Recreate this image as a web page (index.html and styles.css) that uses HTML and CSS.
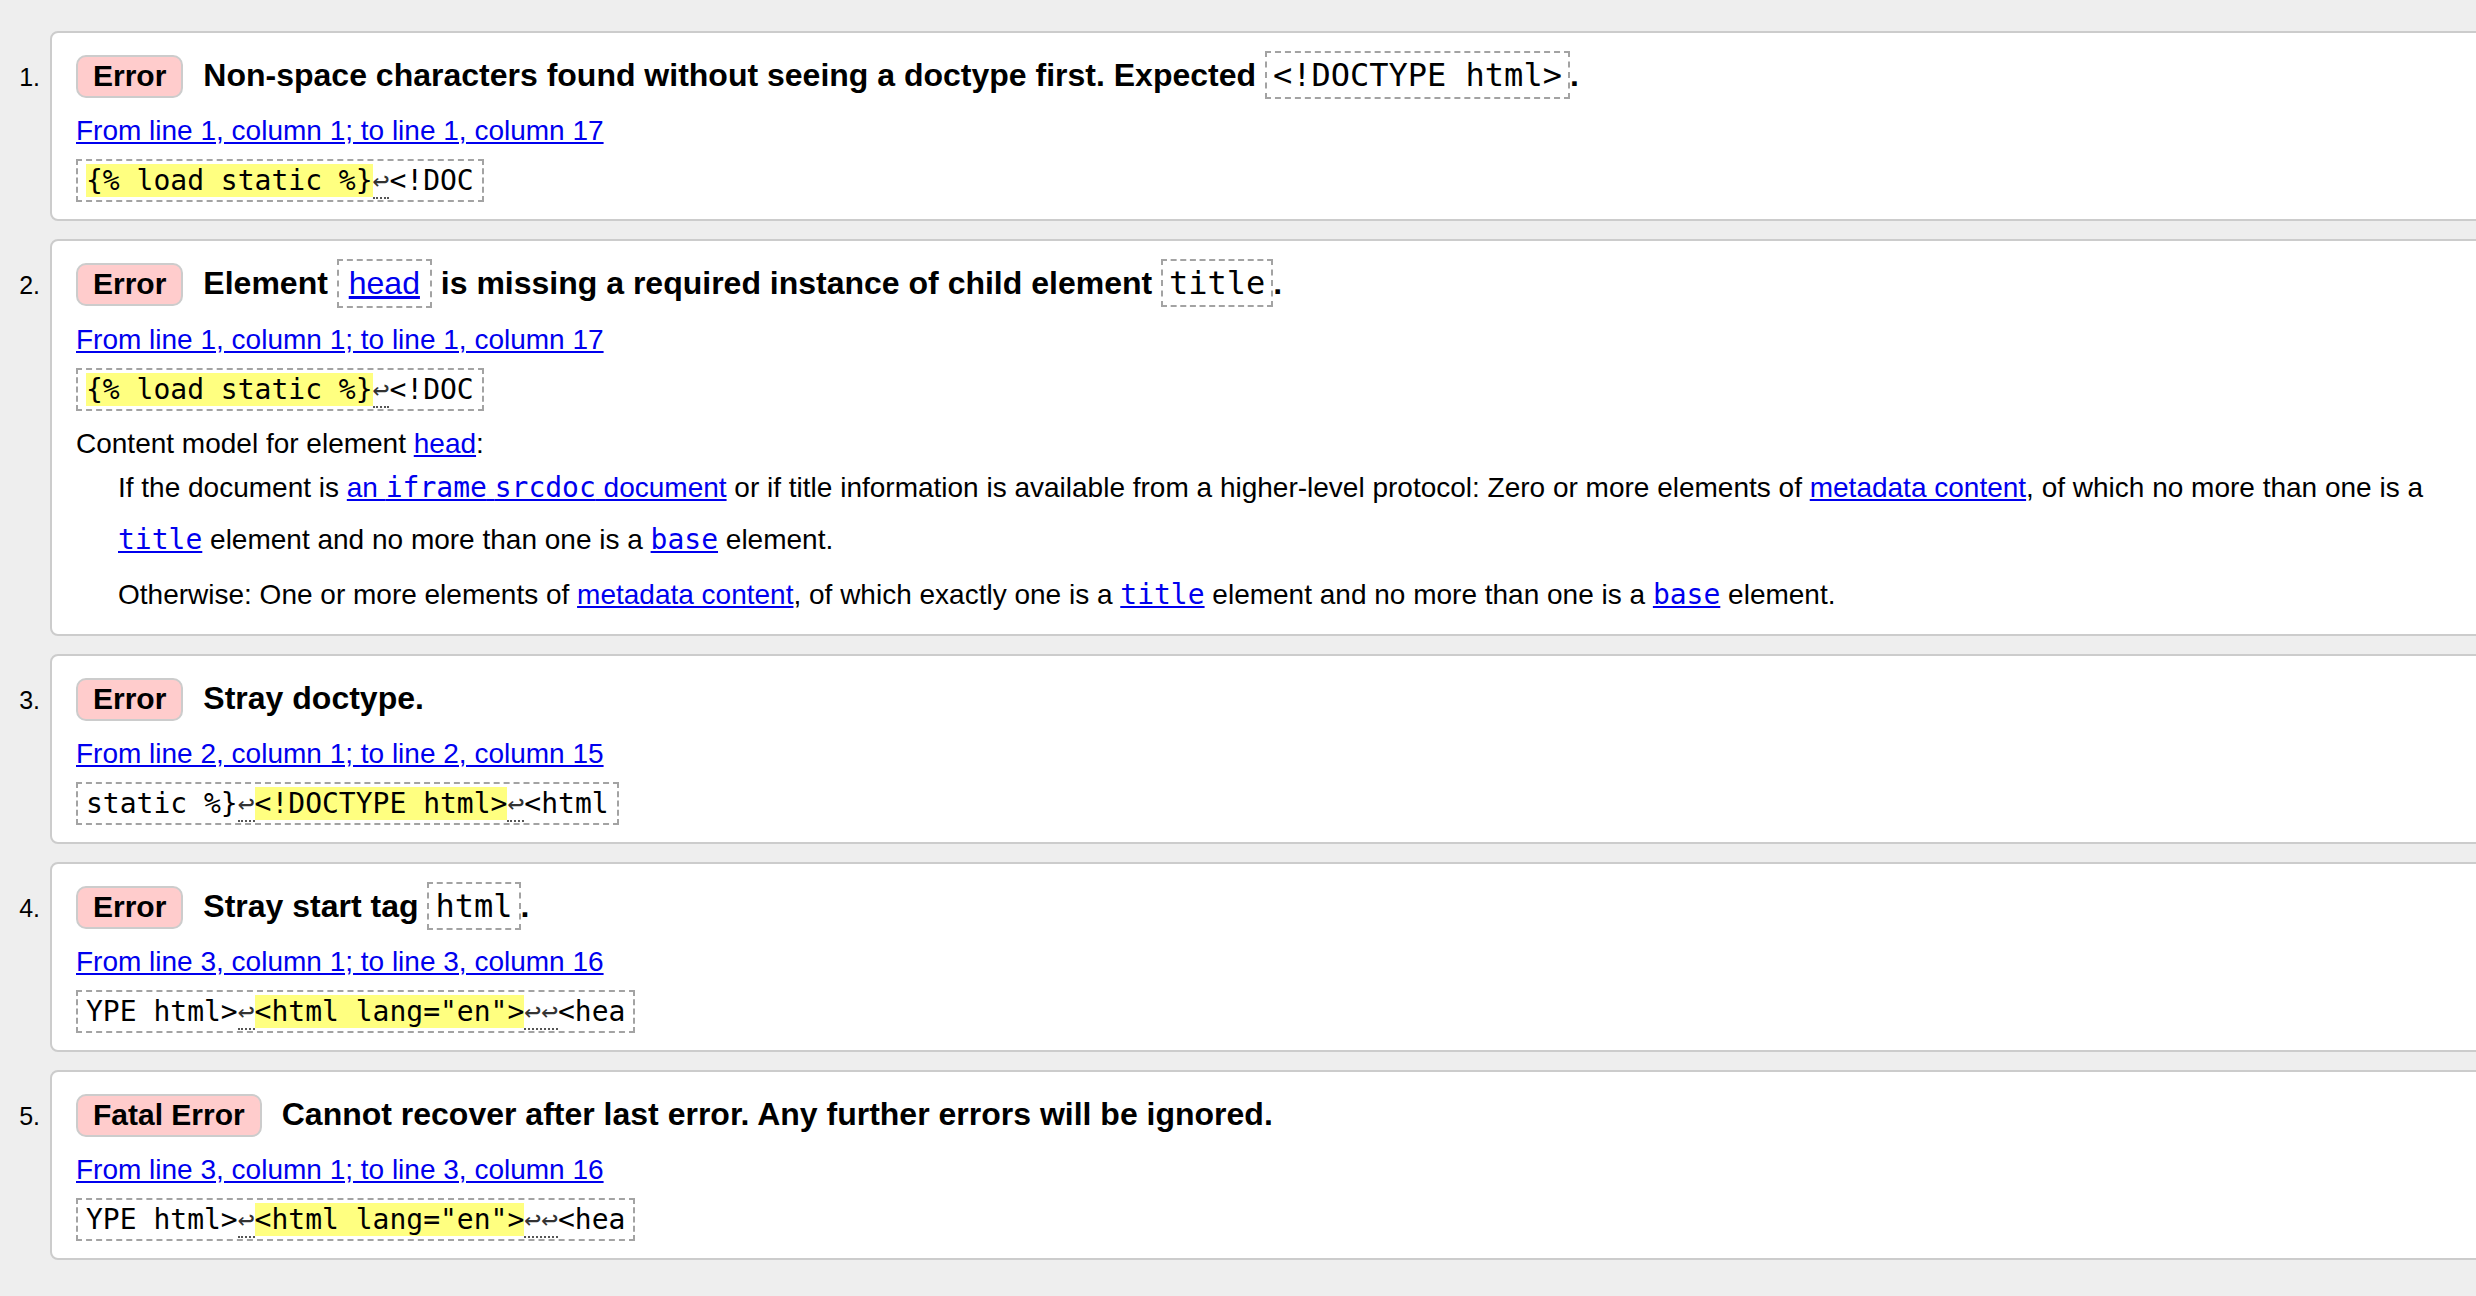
FILE: index.html
```html
<!DOCTYPE html>
<html lang="en">
<head>
<meta charset="utf-8">
<title>Validation results</title>
<link rel="stylesheet" href="styles.css">
</head>
<body>
<ol class="results">
  <li class="item">
    <span class="num">1.</span>
    <div class="card">
      <p class="head"><strong class="badge">Error</strong><span>Non-space characters found without seeing a doctype first. Expected <code class="hcode">&lt;!DOCTYPE html&gt;</code>.</span></p>
      <p class="loc"><a href="#l1">From line 1, column 1; to line 1, column 17</a></p>
      <p class="extract"><code class="ecode"><mark>{% load static %}</mark><span class="lf" title="Line break">↩</span>&lt;!DOC</code></p>
    </div>
  </li>
  <li class="item">
    <span class="num">2.</span>
    <div class="card">
      <p class="head"><strong class="badge">Error</strong><span>Element <code class="hcode sans"><a href="#head">head</a></code> is missing a required instance of child element <code class="hcode">title</code>.</span></p>
      <p class="loc"><a href="#l1b">From line 1, column 1; to line 1, column 17</a></p>
      <p class="extract"><code class="ecode"><mark>{% load static %}</mark><span class="lf" title="Line break">↩</span>&lt;!DOC</code></p>
      <dl class="model">
        <dt>Content model for element <a href="#head">head</a>:</dt>
        <dd>
          <p>If the document is <a href="#srcdoc">an <code>iframe</code> <code>srcdoc</code> document</a> or if title information is available from a higher-level protocol: Zero or more elements of <a href="#meta">metadata content</a>, of which no more than one is a <a href="#title"><code>title</code></a> element and no more than one is a <a href="#base"><code>base</code></a> element.</p>
          <p>Otherwise: One or more elements of <a href="#meta">metadata content</a>, of which exactly one is a <a href="#title"><code>title</code></a> element and no more than one is a <a href="#base"><code>base</code></a> element.</p>
        </dd>
      </dl>
    </div>
  </li>
  <li class="item">
    <span class="num">3.</span>
    <div class="card">
      <p class="head"><strong class="badge">Error</strong><span>Stray doctype.</span></p>
      <p class="loc"><a href="#l2">From line 2, column 1; to line 2, column 15</a></p>
      <p class="extract"><code class="ecode">static %}<span class="lf" title="Line break">↩</span><mark>&lt;!DOCTYPE html&gt;</mark><span class="lf" title="Line break">↩</span>&lt;html</code></p>
    </div>
  </li>
  <li class="item">
    <span class="num">4.</span>
    <div class="card">
      <p class="head"><strong class="badge">Error</strong><span>Stray start tag <code class="hcode">html</code>.</span></p>
      <p class="loc"><a href="#l3">From line 3, column 1; to line 3, column 16</a></p>
      <p class="extract"><code class="ecode">YPE html&gt;<span class="lf" title="Line break">↩</span><mark>&lt;html lang="en"&gt;</mark><span class="lf" title="Line break">↩↩</span>&lt;hea</code></p>
    </div>
  </li>
  <li class="item">
    <span class="num">5.</span>
    <div class="card">
      <p class="head"><strong class="badge">Fatal Error</strong><span>Cannot recover after last error. Any further errors will be ignored.</span></p>
      <p class="loc"><a href="#l3b">From line 3, column 1; to line 3, column 16</a></p>
      <p class="extract"><code class="ecode">YPE html&gt;<span class="lf" title="Line break">↩</span><mark>&lt;html lang="en"&gt;</mark><span class="lf" title="Line break">↩↩</span>&lt;hea</code></p>
    </div>
  </li>
</ol>
</body>
</html>
```

FILE: styles.css
```css
html {
  overflow: hidden;
  background: #eeeeee;
}

body {
  margin: 0;
  background: #eeeeee;
  color: #000;
  font-family: "Liberation Sans", Arial, sans-serif;
  font-size: 28px;
}

a {
  color: #0000ee;
  text-decoration: underline;
}

code {
  font-family: "DejaVu Sans Mono", "Liberation Mono", monospace;
}

.results {
  list-style: none;
  margin: 0;
  padding: 31px 0 0 0;
  width: 2500px;
}

.item {
  display: flex;
  align-items: baseline;
  margin-bottom: 18px;
}

.num {
  flex: 0 0 50px;
  box-sizing: border-box;
  padding-right: 10px;
  text-align: right;
  font-size: 25px;
}

.card {
  flex: 1 1 auto;
  min-width: 0;
  background: #fff;
  border: 2px solid #cccccc;
  border-radius: 8px;
  padding: 18px 24px 17px 24px;
}

.head {
  margin: 0;
  font-size: 32px;
  font-weight: bold;
  line-height: 48px;
}

.badge {
  display: inline-block;
  line-height: normal;
  font-size: 30px;
  padding: 2px 15px 3px;
  border: 2px solid #cccccc;
  border-radius: 10px;
  background: #ffcccc;
  margin-right: 20px;
}

.hcode {
  display: inline-block;
  line-height: normal;
  font-weight: normal;
  font-size: 32px;
  padding: 3px 6px;
  border: 2px dashed #a3a3a3;
}

.hcode.sans {
  font-family: "Liberation Sans", Arial, sans-serif;
  padding: 4px 10px;
}

.loc {
  margin: 16px 0 0;
  line-height: normal;
}

.extract {
  display: flex;
  margin: 12px 0 0;
}

.ecode {
  display: block;
  font-size: 28px;
  line-height: normal;
  padding: 3px 8px;
  border: 2px dashed #a3a3a3;
}

.ecode mark {
  background: #ffff80;
  color: #000;
}

.lf {
  border-bottom: 2px dotted #555;
  color: #333;
}

.model {
  margin: 17px 0 -4px;
}

.model dt {
  line-height: normal;
}

.model dd {
  margin: 2px 0 0 42px;
}

.model dd p {
  margin: 0;
  line-height: 52px;
}

.model dd p + p {
  margin-top: 3px;
}
```
